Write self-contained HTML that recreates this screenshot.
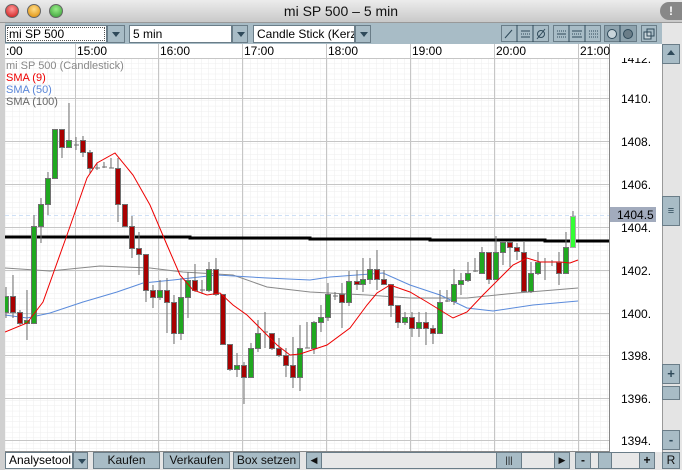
<!DOCTYPE html>
<html><head><meta charset="utf-8"><style>
*{margin:0;padding:0;box-sizing:border-box}
body{width:682px;height:470px;overflow:hidden;background:#e6e6e6;font-family:"Liberation Sans",sans-serif;position:relative}
.a{position:absolute}
.tb{left:0;top:0;width:682px;height:23px;background:linear-gradient(#ececec,#c9c9c9);border-bottom:1px solid #999}
.title{left:0;width:682px;top:3px;text-align:center;font-size:14px;color:#111}
.dot{top:4px;width:14px;height:14px;border-radius:50%;border:1px solid #666}
.bar{left:5px;top:23px;width:657px;height:21px;background:#a8bcc6}
.combo{background:#fff;border:1px solid #6a7d88;font-size:12px;line-height:16px;padding-left:3px;color:#000;height:18px;top:25px}
.arr{background:#a8bcc6;border:1px solid #6a7d88;height:18px;top:25px}
.arr:after{content:"";position:absolute;left:4px;top:6px;border-left:4px solid transparent;border-right:4px solid transparent;border-top:5px solid #2f4a5a}
.btn{background:#a8bcc6;border:1px solid #6a7d88;font-size:12px;text-align:center;line-height:15px;color:#111;height:17px;top:452px}
.tbtn{top:25px;height:17px;border:1px solid #6a7d88;background:#a8bcc6}
</style></head><body>
<div class="a tb"></div>
<div class="a dot" style="left:5px;background:radial-gradient(circle at 50% 35%,#f99,#c11)"></div>
<div class="a dot" style="left:27px;background:radial-gradient(circle at 50% 35%,#fd8,#d80)"></div>
<div class="a dot" style="left:49px;background:radial-gradient(circle at 50% 35%,#9e8,#393)"></div>
<div class="a title">mi SP 500 – 5 min</div>
<div class="a" style="left:660px;top:2px;width:22px;height:18px;border-radius:9px 0 0 9px;background:#888;color:#fff;font-size:12px;font-weight:bold;text-align:center;line-height:18px">!</div>
<div class="a" style="left:0;top:23px;width:5px;height:447px;background:#d0d0d0"></div>
<div class="a bar"></div>
<div class="a combo" style="left:5px;width:102px;outline:1px dotted #555;outline-offset:-3px">mi SP 500</div>
<div class="a arr" style="left:107px;width:18px"></div>
<div class="a combo" style="left:129px;width:103px">5 min</div>
<div class="a arr" style="left:232px;width:16px"></div>
<div class="a combo" style="left:253px;width:102px;overflow:hidden;white-space:nowrap">Candle Stick (Kerzen</div>
<div class="a arr" style="left:355px;width:16px"></div>
<div class="a tbtn" style="left:501px;width:48px"></div>
<div class="a tbtn" style="left:553px;width:48px"></div>
<div class="a tbtn" style="left:604px;width:33px;background:#8ea3ae"></div>
<div class="a tbtn" style="left:641px;width:16px"></div>
<svg class="a" style="left:0;top:23px" width="682" height="22">
<g stroke="#2f4a5a" fill="none" stroke-width="1">
<line x1="517" y1="2" x2="517" y2="19"/><line x1="533" y1="2" x2="533" y2="19"/>
<line x1="569" y1="2" x2="569" y2="19"/><line x1="585" y1="2" x2="585" y2="19"/>
<line x1="620" y1="2" x2="620" y2="19"/>
<line x1="505" y1="15" x2="512" y2="7"/>
<line x1="521" y1="8" x2="530" y2="8"/><line x1="521" y1="11" x2="530" y2="11" stroke-dasharray="1 1"/><line x1="521" y1="14" x2="530" y2="14"/>
<circle cx="541" cy="11" r="3.5"/><line x1="537" y1="16" x2="545" y2="6"/>
<line x1="557" y1="8" x2="566" y2="8" stroke-dasharray="1 1"/><line x1="557" y1="11" x2="566" y2="11"/><line x1="557" y1="14" x2="566" y2="14" stroke-dasharray="1 1"/>
<line x1="572" y1="8" x2="582" y2="8"/><line x1="572" y1="11" x2="582" y2="11" stroke-dasharray="1 1"/><line x1="572" y1="14" x2="582" y2="14"/>
<line x1="589" y1="8" x2="598" y2="8" stroke-dasharray="1 1"/><line x1="589" y1="11" x2="598" y2="11" stroke-dasharray="1 1"/><line x1="589" y1="14" x2="598" y2="14" stroke-dasharray="1 1"/>
<circle cx="612" cy="11" r="4.5" fill="#c8d4da"/><circle cx="628" cy="11" r="4.5" fill="#6a7d88"/>
<rect x="644" y="9" width="7" height="7" fill="#c8d4da"/><rect x="647" y="6" width="7" height="7"/>
</g></svg>
<svg class="a" style="left:5px;top:44px" width="657" height="408">
<defs><pattern id="mg" width="7" height="5.35" patternUnits="userSpaceOnUse" x="0" y="3"><path d="M0 0H7M0 0V5.35" stroke="#eeeeee" stroke-width="1" fill="none"/></pattern></defs>
<rect width="657" height="408" fill="#fff"/>
<rect x="0" y="15" width="604" height="393" fill="url(#mg)"/>
<g stroke="#c6c6c6" stroke-width="1">
<line x1="0" y1="14.5" x2="604" y2="14.5"/>
<line x1="70.5" y1="0" x2="70.5" y2="408"/><line x1="153.5" y1="0" x2="153.5" y2="408"/><line x1="237.5" y1="0" x2="237.5" y2="408"/><line x1="321.5" y1="0" x2="321.5" y2="408"/><line x1="405.5" y1="0" x2="405.5" y2="408"/><line x1="489.5" y1="0" x2="489.5" y2="408"/><line x1="573.5" y1="0" x2="573.5" y2="408"/>
<line x1="0" y1="54.5" x2="604" y2="54.5"/><line x1="0" y1="97.5" x2="604" y2="97.5"/><line x1="0" y1="140.5" x2="604" y2="140.5"/><line x1="0" y1="183.5" x2="604" y2="183.5"/><line x1="0" y1="226.5" x2="604" y2="226.5"/><line x1="0" y1="269.5" x2="604" y2="269.5"/><line x1="0" y1="311.5" x2="604" y2="311.5"/><line x1="0" y1="354.5" x2="604" y2="354.5"/><line x1="0" y1="396.5" x2="604" y2="396.5"/>
</g>
<line x1="604.5" y1="0" x2="604.5" y2="408" stroke="#888"/>
<line x1="0" y1="407.5" x2="604" y2="407.5" stroke="#888"/>
<line x1="0" y1="171.5" x2="604" y2="171.5" stroke="#cfe0f5" stroke-dasharray="4 3"/>
<g font-size="12" fill="#000">
<text x="1" y="11">:00</text><text x="72" y="11">15:00</text><text x="155" y="11">16:00</text><text x="239" y="11">17:00</text><text x="323" y="11">18:00</text><text x="407" y="11">19:00</text><text x="491" y="11">20:00</text><text x="575" y="11">21:00</text>
</g>
<g font-size="11" fill="#888"><text x="1" y="25">mi SP 500 (Candlestick)</text></g>
<g font-size="11"><text x="1" y="37" fill="#e00">SMA (9)</text><text x="1" y="49" fill="#5a86d8">SMA (50)</text><text x="1" y="61" fill="#666">SMA (100)</text></g>
<g font-size="12" fill="#000"><text x="616" y="19">1412.</text><text x="616" y="59">1410.</text><text x="616" y="102">1408.</text><text x="616" y="145">1406.</text><text x="616" y="188">1404.</text><text x="616" y="231">1402.</text><text x="616" y="274">1400.</text><text x="616" y="316">1398.</text><text x="616" y="359">1396.</text><text x="616" y="401">1394.</text></g>
<rect x="605" y="0" width="52" height="14" fill="#fff"/>
<rect x="605" y="163" width="46" height="15" fill="#a2abbd"/><text x="612" y="175" font-size="12">1404.5</text>
<g transform="translate(-5,-44)">
<polyline fill="none" stroke="#888" stroke-width="1" points="5,268 50,271 100,266 150,268 183,272 233,275 267,287 310,292 367,295 410,298 467,298 517,293 578,288"/>
<polyline fill="none" stroke="#5b8bdb" stroke-width="1" points="5,315 27,318 50,313 83,302 117,292 143,283 173,280 217,275 267,278 310,280 330,277 383,273 410,285 440,295 467,308 493,311 533,305 578,301"/>
<path d="M5 237H190V238H310V239H430V240H545V241H609" stroke="#000" stroke-width="3" fill="none"/>
<g stroke="#707070" stroke-width="1">
<line x1="6" y1="287" x2="6" y2="318"/><line x1="13" y1="275" x2="13" y2="318"/><line x1="20" y1="310" x2="20" y2="325"/><line x1="27" y1="290" x2="27" y2="340"/><line x1="34" y1="215" x2="34" y2="323"/><line x1="41" y1="198" x2="41" y2="243"/><line x1="48" y1="172" x2="48" y2="215"/><line x1="55" y1="129" x2="55" y2="178"/><line x1="62" y1="129" x2="62" y2="158"/><line x1="69" y1="103" x2="69" y2="147"/><line x1="76" y1="137" x2="76" y2="150"/><line x1="83" y1="136" x2="83" y2="157"/><line x1="90" y1="150" x2="90" y2="173"/><line x1="97" y1="163" x2="97" y2="170"/><line x1="104" y1="162" x2="104" y2="168"/><line x1="111" y1="158" x2="111" y2="168"/><line x1="118" y1="158" x2="118" y2="222"/><line x1="125" y1="204" x2="125" y2="226"/><line x1="132" y1="216" x2="132" y2="258"/><line x1="139" y1="232" x2="139" y2="275"/><line x1="146" y1="254" x2="146" y2="302"/><line x1="153" y1="285" x2="153" y2="308"/><line x1="160" y1="280" x2="160" y2="300"/><line x1="167" y1="278" x2="167" y2="333"/><line x1="174" y1="295" x2="174" y2="344"/><line x1="181" y1="278" x2="181" y2="340"/><line x1="188" y1="272" x2="188" y2="318"/><line x1="195" y1="264" x2="195" y2="292"/><line x1="202" y1="280" x2="202" y2="294"/><line x1="209" y1="262" x2="209" y2="292"/><line x1="216" y1="258" x2="216" y2="296"/><line x1="223" y1="294" x2="223" y2="344"/><line x1="230" y1="344" x2="230" y2="371"/><line x1="237" y1="353" x2="237" y2="377"/><line x1="244" y1="362" x2="244" y2="404"/><line x1="251" y1="343" x2="251" y2="377"/><line x1="258" y1="320" x2="258" y2="352"/><line x1="265" y1="312" x2="265" y2="348"/><line x1="272" y1="333" x2="272" y2="350"/><line x1="279" y1="338" x2="279" y2="357"/><line x1="286" y1="348" x2="286" y2="377"/><line x1="293" y1="337" x2="293" y2="388"/><line x1="300" y1="325" x2="300" y2="391"/><line x1="307" y1="322" x2="307" y2="348"/>
<line x1="314" y1="321" x2="314" y2="354"/><line x1="321" y1="305" x2="321" y2="332"/><line x1="328" y1="283" x2="328" y2="321"/><line x1="335" y1="292" x2="335" y2="300"/><line x1="342" y1="283" x2="342" y2="328"/><line x1="349" y1="271" x2="349" y2="306"/><line x1="357" y1="270" x2="357" y2="290"/><line x1="363" y1="258" x2="363" y2="292"/><line x1="370" y1="258" x2="370" y2="284"/><line x1="377" y1="250" x2="377" y2="290"/><line x1="384" y1="270" x2="384" y2="285"/><line x1="391" y1="284" x2="391" y2="317"/><line x1="398" y1="305" x2="398" y2="328"/><line x1="405" y1="312" x2="405" y2="325"/><line x1="412" y1="312" x2="412" y2="337"/><line x1="419" y1="312" x2="419" y2="337"/><line x1="426" y1="312" x2="426" y2="345"/><line x1="433" y1="325" x2="433" y2="344"/><line x1="440" y1="290" x2="440" y2="333"/><line x1="447" y1="290" x2="447" y2="302"/><line x1="454" y1="269" x2="454" y2="305"/><line x1="461" y1="273" x2="461" y2="295"/><line x1="468" y1="262" x2="468" y2="282"/><line x1="475" y1="258" x2="475" y2="272"/><line x1="482" y1="247" x2="482" y2="273"/><line x1="489" y1="252" x2="489" y2="284"/><line x1="496" y1="236" x2="496" y2="279"/><line x1="503" y1="242" x2="503" y2="265"/><line x1="510" y1="241" x2="510" y2="267"/><line x1="517" y1="243" x2="517" y2="260"/><line x1="524" y1="242" x2="524" y2="291"/><line x1="531" y1="262" x2="531" y2="293"/><line x1="538" y1="252" x2="538" y2="275"/><line x1="545" y1="258" x2="545" y2="280"/><line x1="552" y1="260" x2="552" y2="266"/><line x1="559" y1="252" x2="559" y2="285"/><line x1="566" y1="232" x2="566" y2="273"/><line x1="573" y1="211" x2="573" y2="247"/>
</g>
<g stroke="#707070" stroke-width="1">
<g fill="#1fa81f">
<rect x="3.5" y="296.5" width="5" height="16"/><rect x="24.5" y="320.5" width="5" height="3"/><rect x="31.5" y="226.5" width="5" height="97"/><rect x="38.5" y="204.5" width="5" height="22"/><rect x="45.5" y="178.5" width="5" height="26"/><rect x="52.5" y="129.5" width="5" height="49"/><rect x="66.5" y="140.5" width="5" height="7"/><rect x="157.5" y="290.5" width="5" height="7"/><rect x="178.5" y="297.5" width="5" height="36"/><rect x="185.5" y="280.5" width="5" height="17"/><rect x="206.5" y="269.5" width="5" height="21"/><rect x="234.5" y="365.5" width="5" height="4"/><rect x="248.5" y="348.5" width="5" height="29"/><rect x="255.5" y="333.5" width="5" height="15"/><rect x="297.5" y="348.5" width="5" height="29"/>
<rect x="311.5" y="322.5" width="5" height="26"/><rect x="318.5" y="317.5" width="5" height="5"/><rect x="325.5" y="294.5" width="5" height="23"/><rect x="346.5" y="281.5" width="5" height="21"/><rect x="360.5" y="279.5" width="5" height="5"/><rect x="367.5" y="269.5" width="5" height="10"/><rect x="402.5" y="317.5" width="5" height="5"/><rect x="416.5" y="322.5" width="5" height="6"/><rect x="437.5" y="302.5" width="5" height="31"/><rect x="451.5" y="284.5" width="5" height="17"/><rect x="458.5" y="280.5" width="5" height="4"/><rect x="465.5" y="273.5" width="5" height="7"/><rect x="479.5" y="252.5" width="5" height="21"/><rect x="493.5" y="252.5" width="5" height="27"/><rect x="500.5" y="242.5" width="5" height="10"/><rect x="528.5" y="273.5" width="5" height="18"/><rect x="535.5" y="262.5" width="5" height="11"/><rect x="563.5" y="247.5" width="5" height="26"/>
</g>
<g fill="#a80000">
<rect x="10.5" y="296.5" width="5" height="16"/><rect x="17.5" y="312.5" width="5" height="11"/><rect x="59.5" y="129.5" width="5" height="18"/><rect x="80.5" y="140.5" width="5" height="12"/><rect x="87.5" y="152.5" width="5" height="16"/><rect x="115.5" y="168.5" width="5" height="36"/><rect x="122.5" y="204.5" width="5" height="22"/><rect x="129.5" y="226.5" width="5" height="22"/><rect x="136.5" y="248.5" width="5" height="6"/><rect x="143.5" y="254.5" width="5" height="36"/><rect x="150.5" y="290.5" width="5" height="7"/><rect x="164.5" y="290.5" width="5" height="12"/><rect x="171.5" y="302.5" width="5" height="31"/><rect x="192.5" y="280.5" width="5" height="10"/><rect x="213.5" y="269.5" width="5" height="25"/><rect x="220.5" y="294.5" width="5" height="50"/><rect x="227.5" y="344.5" width="5" height="25"/><rect x="241.5" y="365.5" width="5" height="12"/><rect x="269.5" y="333.5" width="5" height="15"/><rect x="276.5" y="348.5" width="5" height="7"/><rect x="283.5" y="355.5" width="5" height="10"/><rect x="290.5" y="365.5" width="5" height="12"/>
<rect x="339.5" y="294.5" width="5" height="8"/><rect x="354.5" y="281.5" width="5" height="3"/><rect x="374.5" y="269.5" width="5" height="10"/><rect x="381.5" y="279.5" width="5" height="5"/><rect x="388.5" y="284.5" width="5" height="21"/><rect x="395.5" y="305.5" width="5" height="17"/><rect x="409.5" y="317.5" width="5" height="11"/><rect x="423.5" y="322.5" width="5" height="6"/><rect x="430.5" y="328.5" width="5" height="5"/><rect x="486.5" y="252.5" width="5" height="27"/><rect x="507.5" y="242.5" width="5" height="5"/><rect x="514.5" y="247.5" width="5" height="4"/><rect x="521.5" y="252.5" width="5" height="39"/><rect x="556.5" y="262.5" width="5" height="11"/>
</g>
<rect x="570.5" y="216.5" width="5" height="31" fill="#33ff33" stroke="#aaa"/>
<g fill="none"><line x1="74" y1="145" x2="79" y2="145"/><line x1="95" y1="168" x2="100" y2="168"/><line x1="102" y1="167" x2="107" y2="167"/><line x1="109" y1="168" x2="114" y2="168"/><line x1="200" y1="290" x2="205" y2="290"/><line x1="263" y1="332" x2="268" y2="332"/><line x1="305" y1="348" x2="310" y2="348"/><line x1="333" y1="296" x2="338" y2="296"/><line x1="445" y1="301" x2="450" y2="301"/><line x1="473" y1="271" x2="478" y2="271"/><line x1="543" y1="262" x2="548" y2="262"/><line x1="550" y1="262" x2="555" y2="262"/></g>
</g>
<polyline fill="none" stroke="#ee0000" stroke-width="1" points="5,332 27,323 43,302 67,235 87,178 97,163 115,153 133,175 150,205 167,245 180,275 193,290 207,295 220,293 233,305 247,315 260,328 277,345 290,355 300,354 327,345 350,328 367,305 377,293 390,285 410,292 427,302 440,310 453,318 467,312 483,295 500,278 513,265 527,258 540,262 560,262 570,263 578,260"/>
</g>
</svg>
<div class="a" style="left:662px;top:44px;width:18px;height:408px;background:#e4e4e4;border-left:1px solid #999"></div>
<div class="a tbtn" style="left:662px;top:44px;width:18px;height:20px"></div>
<div class="a" style="left:667px;top:50px;border-left:4px solid transparent;border-right:4px solid transparent;border-bottom:5px solid #2f4a5a"></div>
<div class="a tbtn" style="left:662px;top:196px;width:18px;height:30px;text-align:center;font-size:11px;color:#2f4a5a;line-height:28px">≡</div>
<div class="a tbtn" style="left:662px;top:364px;width:18px;height:20px;text-align:center;font-weight:bold;color:#2f4a5a;font-size:13px;line-height:18px">+</div>
<div class="a tbtn" style="left:662px;top:386px;width:18px;height:14px"></div>
<div class="a tbtn" style="left:662px;top:430px;width:18px;height:20px;text-align:center;font-weight:bold;color:#2f4a5a;font-size:13px;line-height:18px">-</div>
<div class="a combo" style="left:5px;top:452px;width:68px;height:17px;line-height:15px">Analysetool</div>
<div class="a arr" style="left:73px;top:452px;width:15px;height:17px"></div>
<div class="a btn" style="left:93px;width:67px">Kaufen</div>
<div class="a btn" style="left:163px;width:67px">Verkaufen</div>
<div class="a btn" style="left:233px;width:67px">Box setzen</div>
<div class="a" style="left:306px;top:452px;width:264px;height:17px;background:#e8e8e8;border:1px solid #6a7d88"></div>
<div class="a btn" style="left:306px;width:16px;font-size:9px">◀</div>
<div class="a btn" style="left:496px;width:26px;font-size:9px">|||</div>
<div class="a btn" style="left:554px;width:16px;font-size:9px">▶</div>
<div class="a" style="left:575px;top:452px;width:80px;height:17px;background:#e8e8e8;border:1px solid #6a7d88"></div>
<div class="a btn" style="left:575px;width:16px;font-weight:bold">-</div>
<div class="a btn" style="left:598px;width:14px"></div>
<div class="a btn" style="left:639px;width:16px;font-weight:bold">+</div>
<div class="a btn" style="left:662px;width:18px">R</div>
</body></html>
